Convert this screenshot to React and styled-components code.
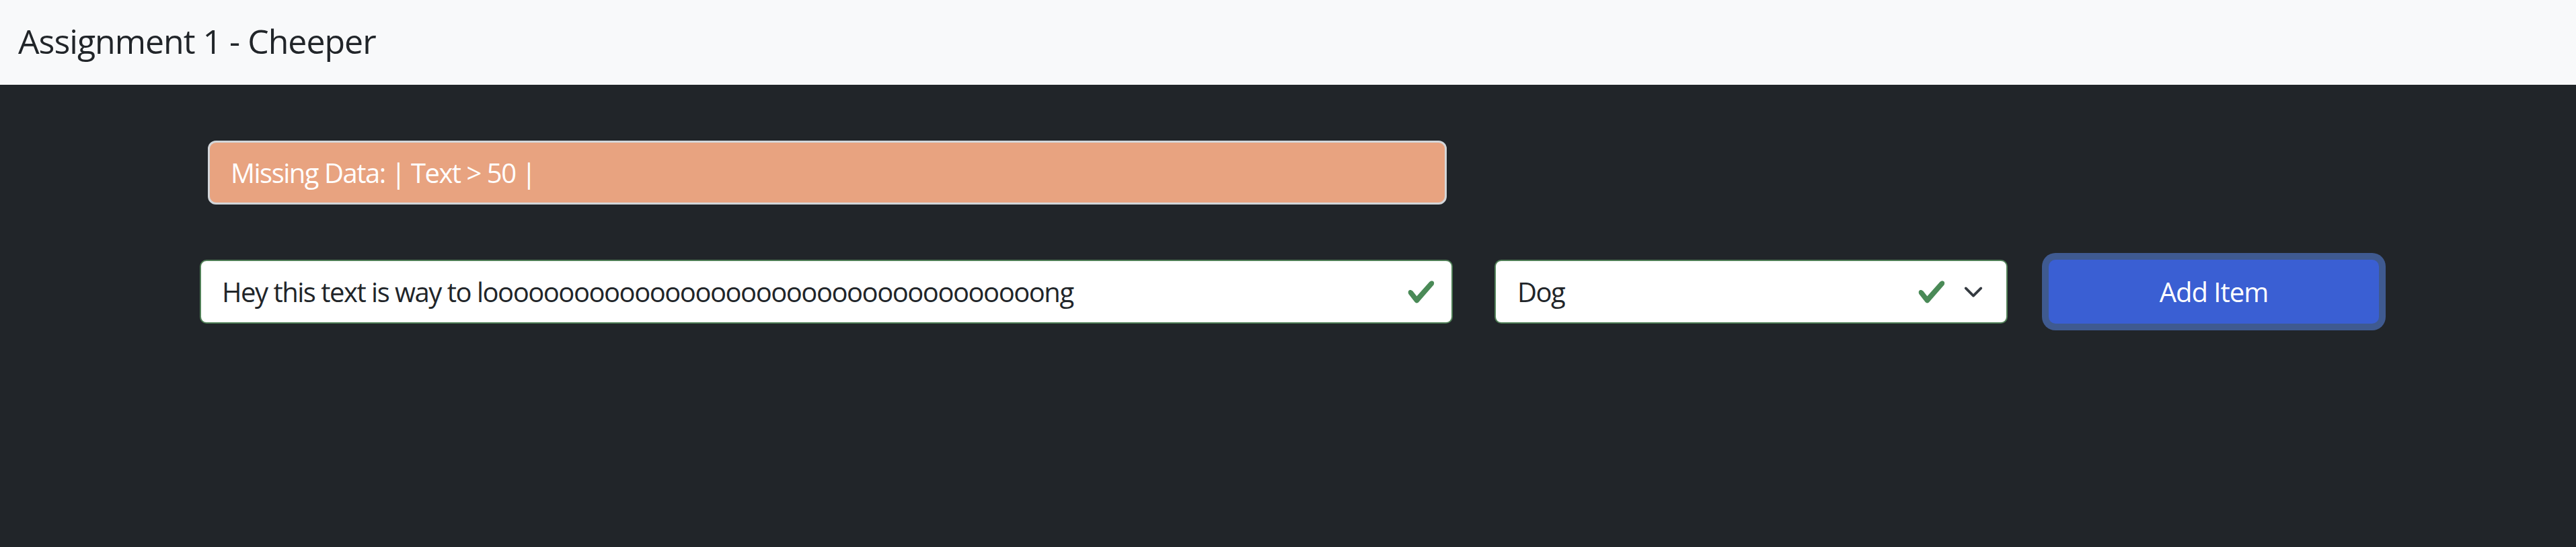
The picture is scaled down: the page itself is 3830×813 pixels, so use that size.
import styled, { createGlobalStyle } from "styled-components";

const GlobalStyle = createGlobalStyle`
  body {
    margin: 0;
    background-color: #212529;
    font-family: "Open Sans", "Noto Sans", sans-serif;
  }
`;

const LONG_TEXT = "Hey this text is way to l" + "o".repeat(37) + "ng";

const CheckIcon = ({ size = 44 }) => (
  <svg width={size} height={size} viewBox="0 0 8 8">
    <path
      fill="#4a8a57"
      d="M2.3 6.73.6 4.53c-.4-1.04.46-1.4 1.1-.8l1.1 1.4 3.4-3.8c.6-.63 1.6-.27 1.2.7l-4 4.6c-.43.5-.8.4-1.1.1z"
    />
  </svg>
);

const ChevronIcon = () => (
  <svg width="30" height="30" viewBox="0 0 16 16">
    <path
      fill="none"
      stroke="#343a40"
      strokeLinecap="round"
      strokeLinejoin="round"
      strokeWidth="2"
      d="m2 5 6 6 6-6"
    />
  </svg>
);

const App = () => {
  return (
    <>
      <GlobalStyle />
      <Navbar>
        <Brand>Assignment 1 - Cheeper</Brand>
      </Navbar>
      <Main>
        <Alert>Missing Data: | Text &gt; 50 |</Alert>
        <FormRow>
          <TextField>
            <TextInput readOnly value={LONG_TEXT} />
            <IconSlot>
              <CheckIcon />
            </IconSlot>
          </TextField>
          <SelectField>
            <SelectValue>Dog</SelectValue>
            <IconSlot>
              <CheckIcon />
            </IconSlot>
            <ChevronSlot>
              <ChevronIcon />
            </ChevronSlot>
          </SelectField>
          <AddButton>Add Item</AddButton>
        </FormRow>
      </Main>
    </>
  );
};

export default App;

const Navbar = styled.nav`
  height: 126px;
  display: flex;
  align-items: center;
  padding-left: 27px;
  background-color: #f8f9fa;
`;

const Brand = styled.div`
  font-size: 50px;
  letter-spacing: -1px;
  color: #212529;
  padding-bottom: 4px;
`;

const Main = styled.main`
  display: flex;
  flex-direction: column;
  padding: 83px 0 60px;
`;

const Alert = styled.div`
  width: 1842px;
  height: 95px;
  box-sizing: border-box;
  margin-left: 309px;
  padding-left: 31px;
  display: flex;
  align-items: center;
  font-size: 40px;
  letter-spacing: -1.5px;
  color: #ffffff;
  background-color: #e8a380;
  border: 3px solid #d3d6d9;
  border-radius: 12px;
`;

const FormRow = styled.div`
  display: flex;
  align-items: center;
  margin-top: 82px;
  padding-left: 297px;
`;

const Field = styled.div`
  height: 95px;
  box-sizing: border-box;
  display: flex;
  align-items: center;
  background-color: #ffffff;
  border: 2px solid #4f7f56;
  border-radius: 10px;
  font-size: 40px;
  letter-spacing: -1.5px;
  color: #212529;
`;

const TextField = styled(Field)`
  width: 1863px;
  padding: 0 23px 0 31px;
`;

const TextInput = styled.input`
  flex: 1;
  min-width: 0;
  border: none;
  outline: none;
  padding: 0;
  background: transparent;
  font-family: inherit;
  font-size: 40px;
  letter-spacing: -1.5px;
  color: #212529;
`;

const SelectField = styled(Field)`
  width: 763px;
  margin-left: 62px;
  padding: 0 34px 0 32px;
`;

const SelectValue = styled.span`
  flex: 1;
`;

const IconSlot = styled.span`
  display: flex;
  width: 44px;
  height: 44px;
`;

const ChevronSlot = styled.span`
  display: flex;
  margin-left: 25px;
`;

const AddButton = styled.button`
  width: 491px;
  height: 95px;
  margin-left: 61px;
  border: none;
  border-radius: 10px;
  background-color: #3a5fd3;
  box-shadow: 0 0 0 10px #3f5a90;
  font-family: inherit;
  font-size: 40px;
  letter-spacing: -1px;
  color: #ffffff;
`;
